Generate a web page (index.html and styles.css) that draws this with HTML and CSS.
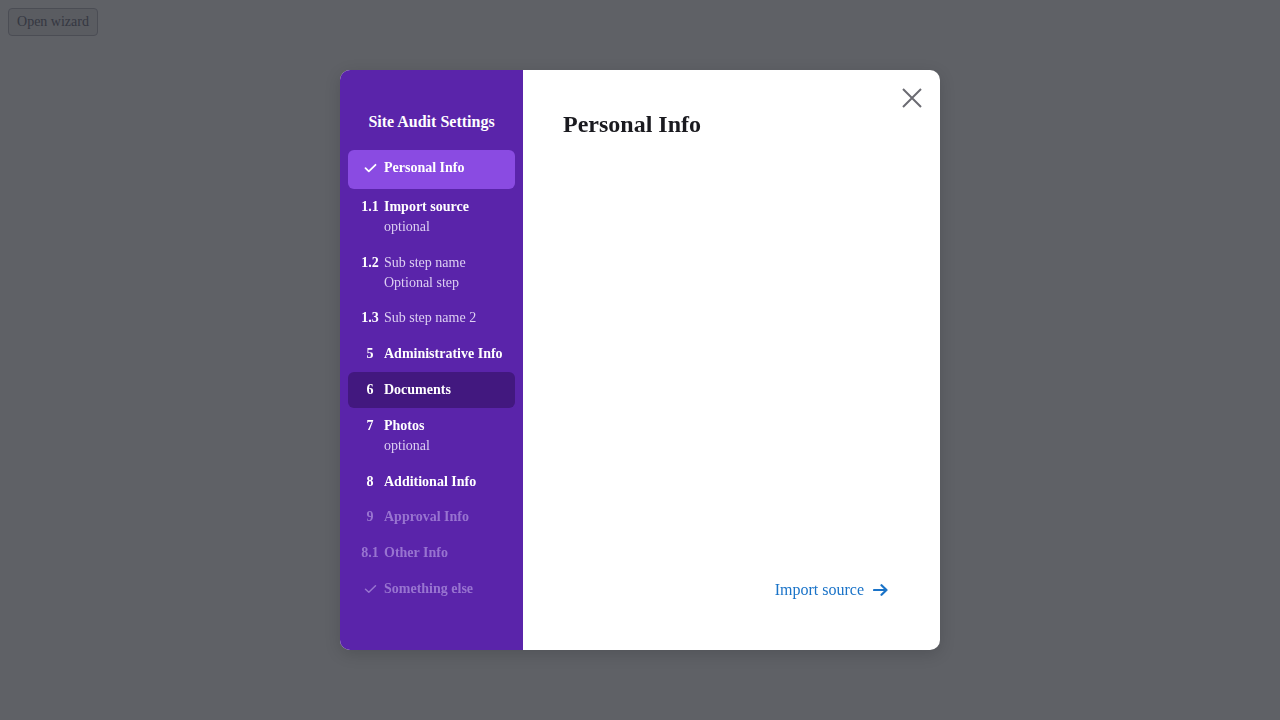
FILE: index.html
```html
<!DOCTYPE html>
<html>
<head>
<meta charset="utf-8">
<link rel="stylesheet" href="styles.css">
</head>
<body>
<button class="open-btn">Open wizard</button>
<div class="overlay">
  <div class="modal">
    <aside class="sidebar">
      <h2 class="side-title">Site Audit Settings</h2>
      <ul class="steps">
        <li class="step active">
          <span class="num"><svg width="13" height="12" viewBox="0 0 13 12"><path d="M1.5 6.2 L4.8 9.3 L11.5 2.8" fill="none" stroke="#fff" stroke-width="1.8" stroke-linecap="round" stroke-linejoin="round"/></svg></span>
          <span class="label"><span class="name bold">Personal Info</span></span>
        </li>
        <li class="step">
          <span class="num">1.1</span>
          <span class="label"><span class="name bold">Import source</span><span class="sub">optional</span></span>
        </li>
        <li class="step">
          <span class="num">1.2</span>
          <span class="label"><span class="name light">Sub step name</span><span class="sub">Optional step</span></span>
        </li>
        <li class="step">
          <span class="num">1.3</span>
          <span class="label"><span class="name light">Sub step name 2</span></span>
        </li>
        <li class="step">
          <span class="num">5</span>
          <span class="label"><span class="name bold">Administrative Info</span></span>
        </li>
        <li class="step selected">
          <span class="num">6</span>
          <span class="label"><span class="name bold">Documents</span></span>
        </li>
        <li class="step">
          <span class="num">7</span>
          <span class="label"><span class="name bold">Photos</span><span class="sub">optional</span></span>
        </li>
        <li class="step">
          <span class="num">8</span>
          <span class="label"><span class="name bold">Additional Info</span></span>
        </li>
        <li class="step disabled">
          <span class="num">9</span>
          <span class="label"><span class="name bold">Approval Info</span></span>
        </li>
        <li class="step disabled">
          <span class="num">8.1</span>
          <span class="label"><span class="name bold">Other Info</span></span>
        </li>
        <li class="step disabled">
          <span class="num"><svg width="13" height="12" viewBox="0 0 13 12"><path d="M1.5 6.2 L4.8 9.3 L11.5 2.8" fill="none" stroke="currentColor" stroke-width="1.5" stroke-linecap="round" stroke-linejoin="round"/></svg></span>
          <span class="label"><span class="name bold">Something else</span></span>
        </li>
      </ul>
    </aside>
    <section class="content">
      <button class="close" aria-label="Close"><svg width="20" height="20" viewBox="0 0 20 20"><path d="M1 1 L19 19 M19 1 L1 19" stroke="#6b6b72" stroke-width="2" fill="none"/></svg></button>
      <h1 class="content-title">Personal Info</h1>
      <div class="footer">
        <a class="next-link" href="#">Import source
          <svg width="15" height="12" viewBox="0 0 15 12"><path d="M1 6 H13.5 M8.5 1.2 L13.5 6 L8.5 10.8" fill="none" stroke="#1a73c8" stroke-width="2.2" stroke-linecap="round" stroke-linejoin="round"/></svg>
        </a>
      </div>
    </section>
  </div>
</div>
</body>
</html>
```
FILE: styles.css
```css
html, body {
  margin: 0;
  padding: 0;
  background: #ffffff;
  font-family: "Liberation Serif", "Times New Roman", serif;
}
.open-btn {
  margin: 8px;
  font-family: "Liberation Serif", serif;
  font-size: 14px;
  color: #8e8f9a;
  background: #f0f0f2;
  border: 1px solid #c8c8cf;
  border-radius: 4px;
  padding: 4px 8px;
  width: 90px;
  height: 28px;
  line-height: 18px;
}
.overlay {
  position: fixed;
  inset: 0;
  background: rgba(2, 4, 12, 0.63);
  display: flex;
  align-items: center;
  justify-content: center;
}
.modal {
  width: 600px;
  height: 580px;
  display: flex;
  border-radius: 10px;
  overflow: hidden;
  background: #fff;
  box-shadow: 0 4px 16px rgba(0,0,0,0.15);
}
.sidebar {
  width: 183px;
  flex: none;
  background: #5a24aa;
  padding: 0 8px;
  box-sizing: border-box;
}
.side-title {
  margin: 42px 0 18px;
  text-align: center;
  color: #fff;
  font-size: 16px;
  line-height: 20px;
  font-weight: bold;
}
.steps {
  list-style: none;
  margin: 0;
  padding: 0;
}
.step {
  display: flex;
  gap: 1px;
  padding: 7.9px 0 7.9px 9px;
  border-radius: 6px;
  font-size: 14px;
  line-height: 20px;
  color: #fff;
}
.step.active {
  background: #8a4be2;
  padding: 8px 0 11px 9px;
}
.step.selected {
  background: #42187f;
}
.num {
  width: 26px;
  flex: none;
  font-weight: bold;
  display: flex;
  justify-content: center;
  align-items: flex-start;
}
.num svg {
  margin-top: 4px;
}
.label {
  display: flex;
  flex-direction: column;
}
.name.bold {
  font-weight: bold;
}
.name.light {
  color: #ddd0f2;
}
.sub {
  color: #ddd0f2;
}
.step.disabled {
  color: #9874d0;
}
.content {
  flex: 1;
  position: relative;
  display: flex;
  flex-direction: column;
  padding: 38px 40px 50px;
}
.close {
  position: absolute;
  top: 18px;
  right: 18px;
  width: 20px;
  height: 20px;
  padding: 0;
  border: none;
  background: none;
  cursor: pointer;
}
.close svg { display: block; }
.content-title {
  margin: 0;
  font-size: 24px;
  line-height: 32px;
  font-weight: bold;
  color: #1a1a1f;
}
.footer {
  margin-top: auto;
  display: flex;
  justify-content: flex-end;
  padding-right: 12px;
}
.next-link {
  color: #1a73c8;
  text-decoration: none;
  font-size: 16px;
  line-height: 20px;
  display: flex;
  align-items: center;
  gap: 9px;
}
```
